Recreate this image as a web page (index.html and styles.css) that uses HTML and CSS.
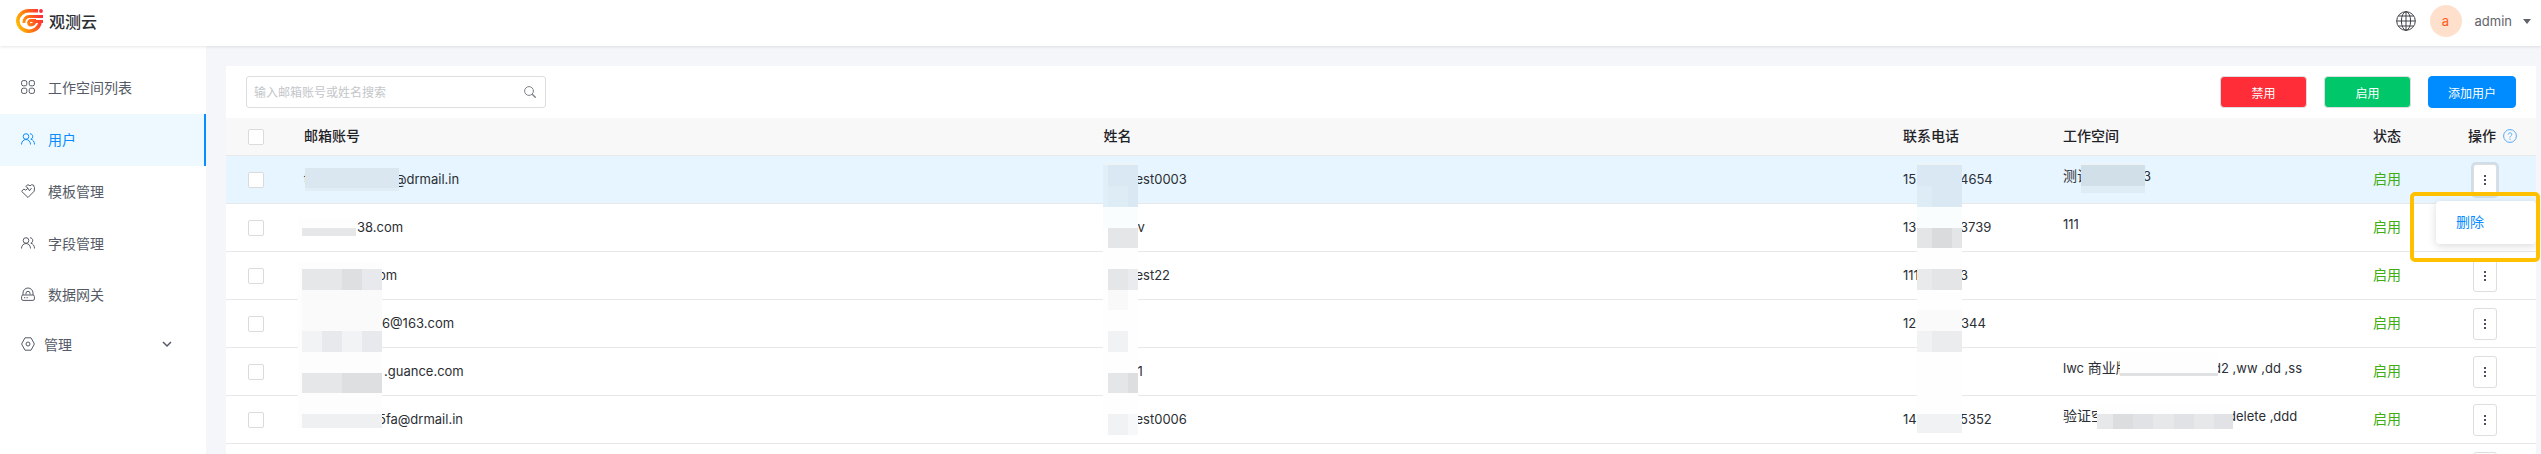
FILE: index.html
```
<!DOCTYPE html>
<html lang="zh-CN">
<head>
    <meta charset="UTF-8">
    <meta name="viewport" content="width=device-width, initial-scale=1.0">
    <title>观测云</title>
    <link rel="stylesheet" href="styles.css">
</head>
<body>
    <header class="topbar">
        <a href="#" class="brand">
            <svg class="logo" viewBox="0 0 27 24" fill="none">
                <defs>
                    <linearGradient id="flame" gradientUnits="userSpaceOnUse" x1="0" y1="18" x2="27" y2="8">
                        <stop offset="0" stop-color="#ffc400"/>
                        <stop offset="0.5" stop-color="#ff7212"/>
                        <stop offset="1" stop-color="#ff2a3c"/>
                    </linearGradient>
                </defs>
                <path d="M22 1.800H13A11.200 10.200 0 1 0 24 13.900" stroke="url(#flame)" stroke-width="3.600"/>
                <path d="M27 7.500H13.500A5.500 5.500 0 0 0 8 14" stroke="url(#flame)" stroke-width="3"/>
                <path d="M27 12.500H19Q18 16 14 16A2.500 2.500 0 0 1 14 11.500H20" stroke="url(#flame)" stroke-width="3"/>
                <circle cx="25" cy="2" r="1.900" fill="#ff2a3c"/>
            </svg>
            <span>观测云</span>
        </a>
        <div class="account">
            <button class="lang" aria-label="语言">
                <svg viewBox="0 0 20 20" fill="none" stroke="#3c4046">
                    <circle cx="10" cy="10" r="9.3"/>
                    <ellipse cx="10" cy="10" rx="4.6" ry="9.3"/>
                    <path d="M10 .7v18.6M.7 10h18.6M2.5 5h15M2.5 15h15"/>
                </svg>
            </button>
            <span class="avatar">a</span>
            <button class="user">admin<i class="caret"></i></button>
        </div>
    </header>

    <div class="layout">
        <nav class="sidebar">
            <a href="#" class="item">
                <svg viewBox="0 0 14 14"><rect x=".6" y=".6" width="5.2" height="5.2" rx="1.6"/><rect x="8.2" y=".6" width="5.2" height="5.2" rx="1.6"/><rect x=".6" y="8.2" width="5.2" height="5.2" rx="1.6"/><rect x="8.2" y="8.2" width="5.2" height="5.2" rx="1.6"/></svg>
                <span>工作空间列表</span>
            </a>
            <a href="#" class="item active">
                <svg viewBox="0 0 14 14"><circle cx="5" cy="4.5" r="2.8"/><path d="M.5 12.5C.5 9.500 2.500 7.500 5 7.500s4.500 2 4.500 5M9 1.800c3.500 0 3.500 4.600.8 5.400 2.200.5 3.700 2.500 3.700 5.300"/></svg>
                <span>用户</span>
            </a>
            <a href="#" class="item">
                <svg viewBox="0 0 14 14"><path d="M7 13.500L.6 7.300 2.800 5l2 1.200L7 4.200 4.800 2.500C6 .5 8 .3 9 2l1.500-1.200 2 .3 1 2.700-.3 3.400z"/><path d="M7 4.200l1.500 2.600L10.500 4"/></svg>
                <span>模板管理</span>
            </a>
            <a href="#" class="item">
                <svg viewBox="0 0 14 14"><circle cx="5" cy="4.5" r="2.8"/><path d="M.5 12.500C.5 9.500 2.500 7.500 5 7.500s4.500 2 4.500 5M9 1.800c3.500 0 3.500 4.600.8 5.400 2.200.5 3.700 2.500 3.700 5.300"/></svg>
                <span>字段管理</span>
            </a>
            <a href="#" class="item short">
                <svg viewBox="0 0 14 14"><rect x=".6" y="8" width="12.8" height="5.400" rx="1.500"/><path d="M2 8V6a5 5 0 0 1 10 0v2M5 7.500V6.300a2 2 0 0 1 4 0v1.200M3 10.700h1.300M5.500 10.700h1.300"/></svg>
                <span>数据网关</span>
            </a>
            <a href="#" class="item short group">
                <svg viewBox="0 0 14 14"><path d="M4 .8h6L13.400 7 10 13.200H4L.6 7z"/><circle cx="7" cy="7" r="2"/></svg>
                <span>管理</span>
                <svg class="arrow" viewBox="0 0 10 10"><path d="M1 3l4 4 4-4"/></svg>
            </a>
        </nav>

        <main class="content">
            <section class="panel">
                <div class="toolbar">
                    <form class="search">
                        <input type="text" placeholder="输入邮箱账号或姓名搜索" aria-label="搜索" spellcheck="false">
                        <button type="button" aria-label="搜索"><svg viewBox="0 0 12 12" fill="none" stroke="#7b8088"><circle cx="5" cy="5" r="4.400"/><path d="M8.200 8.200l3.500 3.500" stroke-width="1.300"/></svg></button>
                    </form>
                    <div class="actions">
                        <button class="btn red">禁用</button>
                        <button class="btn green">启用</button>
                        <button class="btn blue">添加用户</button>
                    </div>
                </div>

                <table class="users">
                    <colgroup>
                        <col class="c-check"><col><col><col class="c-phone"><col class="c-space"><col class="c-status"><col class="c-op">
                    </colgroup>
                    <thead>
                        <tr>
                            <th><input type="checkbox" aria-label="全选"></th>
                            <th>邮箱账号</th>
                            <th>姓名</th>
                            <th>联系电话</th>
                            <th>工作空间</th>
                            <th>状态</th>
                            <th><span class="op-title">操作<svg viewBox="0 0 14 14" fill="none" stroke="#57a9f5"><circle cx="7" cy="7" r="6.400"/><path d="M5.200 5.600c0-2.400 3.600-2.300 3.600-.2C8.800 6.900 7 6.800 7 8.500M7 9.600v1.200"/></svg></span></th>
                        </tr>
                    </thead>
                    <tbody>
                        <tr class="hover">
                            <td class="check"><input type="checkbox" aria-label="选择"></td>
                            <td><span class="lead l90">t</span>@drmail.in
                                <svg class="mask" width="100" height="280" viewBox="288 156 100 280">
                                    <path fill="#dae7f0" d="M305 168h94v20h-94z"/>
                                    <path fill="#e0edf5" d="M305 188h94v3h-94z"/>
                                    <path fill="#fdfdfe" d="M299 219h57v9h-57zM298 263h84v165h-84z"/>
                                    <path fill="#e6e7e9" d="M302 228h54v8h-54z"/>
                                    <path fill="#e5e7e9" d="M302 269h40v21h-40zM302 373h40v20h-40z"/>
                                    <path fill="#dddfe1" d="M342 269h20v21h-20zM342 373h40v20h-40z"/>
                                    <path fill="#e8e9ec" d="M362 269h20v21h-20zM322 331h20v21h-20zM362 331h20v21h-20z"/>
                                    <path fill="#fafafb" d="M302 290h80v41h-80z"/>
                                    <path fill="#f2f3f5" d="M302 331h20v21h-20zM342 331h20v21h-20z"/>
                                    <path fill="#eff0f2" d="M302 414h80v14h-80z"/>
                                </svg>
                            </td>
                            <td><span class="lead l32"></span>est0003
                                <svg class="mask" width="100" height="290" viewBox="1087 156 100 290">
                                    <path fill="#eef3f6" d="M1102 163h35v2h-35z"/>
                                    <path fill="#e1eff9" d="M1102 165h35v42h-35z"/>
                                    <path fill="#d9e8f2" d="M1107 165h30v21h-30zM1127 186h10v21h-10z"/>
                                    <path fill="#deecf6" d="M1107 186h20v21h-20z"/>
                                    <path fill="#fafdfe" d="M1102 207h35v21h-35z"/>
                                    <path fill="#fefefe" d="M1102 228h35v207h-35z"/>
                                    <path fill="#e5e6e8" d="M1107 228h30v20h-30zM1107 269h20v21h-20zM1107 373h20v20h-20z"/>
                                    <path fill="#eaebee" d="M1127 269h10v21h-10z"/>
                                    <path fill="#f9f9fa" d="M1107 290h20v20h-20z"/>
                                    <path fill="#f0f2f4" d="M1107 331h20v21h-20zM1107 414h20v21h-20z"/>
                                    <path fill="#dcdee0" d="M1127 373h10v20h-10z"/>
                                    <path fill="#f7f8fa" d="M1127 414h10v21h-10z"/>
                                </svg>
                            </td>
                            <td><span class="lead l57">15</span>4654
                                <svg class="mask" width="100" height="290" viewBox="1887 156 100 290">
                                    <path fill="#eef3f6" d="M1917 163h45v2h-45z"/>
                                    <path fill="#d9e8f2" d="M1917 165h45v42h-45z"/>
                                    <path fill="#deecf6" d="M1917 186h15v21h-15z"/>
                                    <path fill="#fafdfe" d="M1917 207h45v21h-45z"/>
                                    <path fill="#fefefe" d="M1917 228h45v205h-45z"/>
                                    <path fill="#e4e5e7" d="M1917 228h45v20h-45zM1932 269h30v21h-30z"/>
                                    <path fill="#dadbdd" d="M1932 228h20v20h-20z"/>
                                    <path fill="#e9eaec" d="M1917 269h15v21h-15z"/>
                                    <path fill="#fafafb" d="M1917 310h45v21h-45z"/>
                                    <path fill="#f1f2f4" d="M1917 331h15v21h-15zM1917 414h45v19h-45z"/>
                                    <path fill="#ebecee" d="M1932 331h30v21h-30z"/>
                                </svg>
                            </td>
                            <td class="space"><span class="lead l80"><b>测试</b></span>3
                                <svg class="mask" width="200" height="290" viewBox="2047 156 200 290">
                                    <path fill="#eef3f6" d="M2081 163h64v2h-64z"/>
                                    <path fill="#d1dfe9" d="M2081 165h64v21h-64z"/>
                                    <path fill="#deecf5" d="M2081 186h64v7h-64z"/>
                                    <path fill="#fefefe" d="M2120 352h98v21h-98zM2097 405h136v9h-136z"/>
                                    <path fill="#dfe1e3" d="M2120 373h98v3h-98z"/>
                                    <path fill="#e7e8ea" d="M2097 414h136v15h-136z"/>
                                    <path fill="#dcdddf" d="M2113 414h20v15h-20z"/>
                                    <path fill="#e1e2e5" d="M2133 414h20v15h-20zM2174 414h20v15h-20zM2214 414h19v15h-19z"/>
                                </svg>
                            </td>
                            <td class="status">启用</td>
                            <td class="op">
                                <button class="more open" aria-label="更多"><i></i></button>
                                <div class="menu"><button>删除</button></div>
                                <div class="callout"></div>
                            </td>
                        </tr>
                        <tr>
                            <td class="check"><input type="checkbox" aria-label="选择"></td>
                            <td><span class="lead l53"></span>38.com</td>
                            <td><span class="lead l34"></span>v</td>
                            <td><span class="lead l57">13</span>3739</td>
                            <td class="space">111</td>
                            <td class="status">启用</td>
                            <td class="op"><button class="more" aria-label="更多"><i></i></button></td>
                        </tr>
                        <tr>
                            <td class="check"><input type="checkbox" aria-label="选择"></td>
                            <td><span class="lead l74"></span>om</td>
                            <td><span class="lead l32"></span>est22</td>
                            <td><span class="lead l57">111</span>3</td>
                            <td class="space"></td>
                            <td class="status">启用</td>
                            <td class="op"><button class="more" aria-label="更多"><i></i></button></td>
                        </tr>
                        <tr>
                            <td class="check"><input type="checkbox" aria-label="选择"></td>
                            <td><span class="lead l78"></span>6@163.com</td>
                            <td></td>
                            <td><span class="lead l58">12</span>344</td>
                            <td class="space"></td>
                            <td class="status">启用</td>
                            <td class="op"><button class="more" aria-label="更多"><i></i></button></td>
                        </tr>
                        <tr>
                            <td class="check"><input type="checkbox" aria-label="选择"></td>
                            <td><span class="lead l80"></span>.guance.com</td>
                            <td><span class="lead l34"></span>1</td>
                            <td></td>
                            <td class="space"><span class="lead l150">lwc <b>商业版</b></span>d2 ,ww ,dd ,ss</td>
                            <td class="status">启用</td>
                            <td class="op"><button class="more" aria-label="更多"><i></i></button></td>
                        </tr>
                        <tr>
                            <td class="check"><input type="checkbox" aria-label="选择"></td>
                            <td><span class="lead l74"></span>5fa@drmail.in</td>
                            <td><span class="lead l32"></span>est0006</td>
                            <td><span class="lead l57">14</span>5352</td>
                            <td class="space"><span class="lead l165"><b>验证空</b></span>delete ,ddd</td>
                            <td class="status">启用</td>
                            <td class="op"><button class="more" aria-label="更多"><i></i></button></td>
                        </tr>
                        <tr>
                            <td class="check"><input type="checkbox" aria-label="选择"></td>
                            <td></td>
                            <td></td>
                            <td></td>
                            <td class="space"></td>
                            <td></td>
                            <td class="op"><button class="more" aria-label="更多"><i></i></button></td>
                        </tr>
                    </tbody>
                </table>
            </section>
        </main>
    </div>
</body>
</html>
```
FILE: styles.css
```
*{
    margin:0;
    padding:0;
    box-sizing: border-box;
}
body{
    height:100vh;
    overflow: hidden;
    display: flex;
    flex-direction: column;
    background:#fff;
    color:#2b2e33;
    font-family: Inter, "Noto Sans CJK SC", sans-serif;
    font-size:14px;
}
button{
    border:0;
    background:none;
    font-family: inherit;
    cursor:pointer;
}
a{
    color:inherit;
    text-decoration: none;
}
svg{
    display: block;
}

/* top bar */
.topbar{
    flex:none;
    height:46px;
    padding:0 10px 4px 16px;
    display: flex;
    align-items: center;
    justify-content: space-between;
    box-shadow: 0 1px 3px rgba(0,0,0,.1);
    position: relative;
    z-index: 2;
}
.brand{
    display: flex;
    align-items: center;
    gap:6px;
    font-size:16px;
    font-weight: 500;
}
.logo{
    width:27px;
    height:24px;
}
.account{
    display: flex;
    align-items: center;
}
.lang svg{
    width:20px;
    height:20px;
}
.avatar{
    width:32px;
    height:32px;
    margin:0 13px 0 14px;
    border-radius: 50%;
    background:#ffe0cc;
    color:#ff5b1a;
    font-size:13px;
    line-height:32px;
    text-align: center;
}
.user{
    display: flex;
    align-items: center;
    gap:11px;
    color:#5f646b;
    font-size:13px;
}
.caret{
    border:4px solid transparent;
    border-top:5px solid #5f646b;
    border-bottom:0;
}

/* sidebar */
.layout{
    flex:1;
    min-height:0;
    display: flex;
}
.sidebar{
    flex:none;
    width:206px;
    padding-top:16px;
}
.item{
    height:52px;
    padding:0 0 2px 21px;
    display: flex;
    align-items: center;
    gap:13px;
    color:#555b66;
}
.item svg{
    width:14px;
    height:14px;
    fill:none;
    stroke:currentColor;
}
.item.active{
    background:#edf9ff;
    color:#0a8cff;
    border-right:2px solid #0a8cff;
}
.item.short{
    height:50px;
}
.item.group{
    gap:9px;
}
.item .arrow{
    width:10px;
    height:10px;
    margin:0 34px 0 auto;
    stroke-width:1.5;
}

/* content */
.content{
    flex:1;
    min-width:0;
    padding:20px 5px 0 20px;
    background:#f5f6f9;
}
.panel{
    min-height:100%;
    background:#fff;
}
.toolbar{
    padding:10px 20px;
    display: flex;
    justify-content: space-between;
}
.search{
    width:300px;
    height:32px;
    padding:0 9px 0 7px;
    display: flex;
    align-items: center;
    border:1px solid #dcdee0;
    border-radius: 3px;
}
.search input{
    flex:1;
    border:0;
    outline:0;
    font-family: inherit;
    font-size:12px;
}
.search input::placeholder{
    color:#c3c6ca;
}
.search svg{
    width:12px;
    height:12px;
}
.actions{
    display: flex;
    gap:17px;
}
.btn{
    min-width:87px;
    height:32px;
    padding:0 19px;
    border:1px solid #dcdee0;
    border-radius: 4px;
    color:#fff;
    font-size:12px;
}
.red{
    background:#ff2d37;
}
.green{
    background:#00c769;
}
.blue{
    background:#008cff;
    border-color:#008cff;
}

/* table */
.users{
    width:100%;
    table-layout: fixed;
    border-collapse: separate;
    border-spacing: 0;
}
.c-check{
    width:62px;
}
.c-phone{
    width:160px;
}
.c-space{
    width:310px;
}
.c-status{
    width:95px;
}
.c-op{
    width:84px;
}
.users th{
    height:38px;
    padding:0 0 2px 16px;
    background:#f8f8f9;
    border-bottom:1px solid #e6e8ea;
    text-align: left;
    font-size:14px;
    font-weight: 500;
    line-height:20px;
    color:#1f2226;
}
.users td{
    position: relative;
    height:48px;
    padding:0 0 2px 16px;
    border-bottom:1px solid #e6e8ea;
    font-size:13px;
    line-height:20px;
    white-space: nowrap;
}
.users th:first-child,.users td.check{
    padding:0 0 0 22px;
}
.users input{
    display: block;
    appearance: none;
    width:16px;
    height:16px;
    border:1px solid #d9dbde;
    border-radius: 2px;
    background:#fff;
}
.hover td{
    background:#e6f5ff;
}
.users td.space{
    padding-bottom:8px;
}
.users b{
    font-size:14px;
    font-weight: 400;
}
.users td.status{
    font-size:14px;
    color:#41ad12;
}
.op-title{
    display: flex;
    align-items: center;
    gap:7px;
}
.op-title svg{
    width:14px;
    height:14px;
}

/* text before a masked part */
.lead{
    display: inline-block;
}
.l32{
    width:32px;
}
.l34{
    width:34px;
}
.l53{
    width:53px;
}
.l57{
    width:57px;
}
.l58{
    width:58px;
}
.l74{
    width:74px;
}
.l78{
    width:78px;
}
.l80{
    width:80px;
}
.l90{
    width:90px;
}
.l150{
    width:150px;
}
.l165{
    width:165px;
}
.mask{
    position: absolute;
    top:0;
    left:0;
    overflow: visible;
    z-index: 1;
}

/* row actions */
.users td.op{
    padding:0 0 0 21px;
}
.more{
    display: flex;
    align-items: center;
    justify-content: center;
    width:24px;
    height:32px;
    border:1px solid #dcdee0;
    border-radius: 3px;
    background:#fff;
}
.more i{
    width:2px;
    height:2px;
    background:#4a5060;
    box-shadow: 0 -4px #4a5060, 0 4px #4a5060;
}
.more.open{
    box-shadow: 0 0 0 2px #cfdee9;
}
.menu{
    position: absolute;
    top:45px;
    right:0;
    z-index: 3;
    width:100px;
    padding:4px 0 8px;
    background:#fff;
    border-radius: 4px;
    box-shadow: 0 2px 8px rgba(0,0,0,.15);
}
.menu button{
    width:100%;
    height:31px;
    padding-left:20px;
    text-align: left;
    font-size:14px;
    color:#0a8cff;
}
.callout{
    position: absolute;
    top:36px;
    right:-4px;
    z-index: 4;
    width:130px;
    height:70px;
    border:4px solid #ffc000;
    border-radius: 5px;
    pointer-events: none;
}
```
